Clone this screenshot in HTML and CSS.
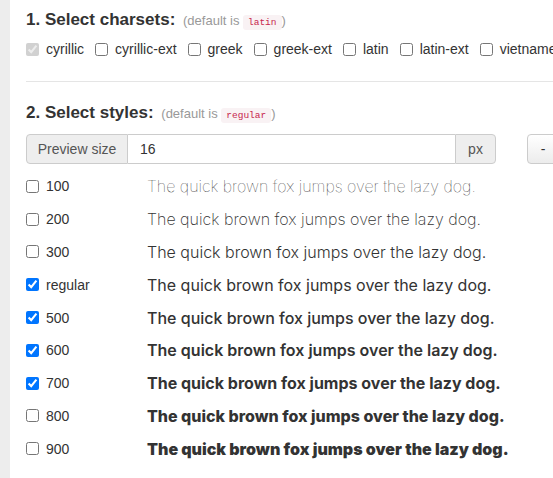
FILE: index.html
```html
<!DOCTYPE html>
<html>
<head>
<meta charset="utf-8">
<link rel="stylesheet" href="styles.css">
</head>
<body>
<div class="page">
  <aside class="rail"></aside>
  <main class="content">
    <section class="charsets">
      <h2 class="heading">1. Select charsets: <span class="hint">(default is <code>latin</code>)</span></h2>
      <div class="charset-list">
        <label class="check"><input type="checkbox" checked disabled> cyrillic</label>
        <label class="check"><input type="checkbox"> cyrillic-ext</label>
        <label class="check"><input type="checkbox"> greek</label>
        <label class="check"><input type="checkbox"> greek-ext</label>
        <label class="check"><input type="checkbox"> latin</label>
        <label class="check"><input type="checkbox"> latin-ext</label>
        <label class="check"><input type="checkbox"> vietnamese</label>
      </div>
    </section>
    <hr class="divider">
    <section class="styles">
      <h2 class="heading">2. Select styles: <span class="hint">(default is <code>regular</code>)</span></h2>
      <div class="toolbar">
        <div class="input-group">
          <span class="addon addon-left">Preview size</span>
          <input class="size-input" type="text" value="16">
          <span class="addon addon-right">px</span>
        </div>
        <button class="btn">-</button>
      </div>
      <div class="style-list">
        <label class="style-row"><span class="check"><input type="checkbox"> 100</span><span class="sample w100">The quick brown fox jumps over the lazy dog.</span></label>
        <label class="style-row"><span class="check"><input type="checkbox"> 200</span><span class="sample w200">The quick brown fox jumps over the lazy dog.</span></label>
        <label class="style-row"><span class="check"><input type="checkbox"> 300</span><span class="sample w300">The quick brown fox jumps over the lazy dog.</span></label>
        <label class="style-row"><span class="check"><input type="checkbox" checked> regular</span><span class="sample w400">The quick brown fox jumps over the lazy dog.</span></label>
        <label class="style-row"><span class="check"><input type="checkbox" checked> 500</span><span class="sample w500">The quick brown fox jumps over the lazy dog.</span></label>
        <label class="style-row"><span class="check"><input type="checkbox" checked> 600</span><span class="sample w600">The quick brown fox jumps over the lazy dog.</span></label>
        <label class="style-row"><span class="check"><input type="checkbox" checked> 700</span><span class="sample w700">The quick brown fox jumps over the lazy dog.</span></label>
        <label class="style-row"><span class="check"><input type="checkbox"> 800</span><span class="sample w800">The quick brown fox jumps over the lazy dog.</span></label>
        <label class="style-row"><span class="check"><input type="checkbox"> 900</span><span class="sample w900">The quick brown fox jumps over the lazy dog.</span></label>
      </div>
    </section>
  </main>
</div>
</body>
</html>
```
FILE: styles.css
```css
html, body {
  margin: 0;
  padding: 0;
  background: #fff;
  overflow: hidden;
}
body {
  font-family: "Liberation Sans", Arial, sans-serif;
  font-size: 14px;
  color: #333;
}
.page {
  display: flex;
  min-height: 478px;
}
.rail {
  width: 10px;
  flex: 0 0 10px;
  background: #ededed;
}
.content {
  flex: 1;
  min-width: 0;
  padding: 10px 0 0 16px;
  white-space: nowrap;
}
.heading {
  margin: 0;
  height: 20px;
  font-size: 17px;
  line-height: 20px;
  font-weight: bold;
  color: #333;
}
.hint {
  font-size: 13px;
  line-height: 1;
  font-weight: normal;
  color: #999;
  margin-left: 3px;
}
code {
  font-family: "Liberation Mono", monospace;
  font-size: 9.5px;
  line-height: 1;
  color: #c7254e;
  background: #f9f2f4;
  border-radius: 3px;
  padding: 2px 5px;
}
.charset-list {
  display: flex;
  gap: 11px;
  margin-top: 9px;
  line-height: 20px;
}
.check {
  display: inline-flex;
  align-items: center;
  gap: 7px;
  font-size: 14px;
}
.check input {
  margin: 0;
  width: 13px;
  height: 13px;
  flex: 0 0 13px;
}
.divider {
  border: 0;
  border-top: 1px solid #e5e5e5;
  margin: 22px 0 21px;
}
.toolbar {
  display: flex;
  gap: 31px;
  margin-top: 11px;
}
.input-group {
  display: flex;
  width: 470px;
  flex: 0 0 470px;
  height: 30px;
}
.addon {
  display: flex;
  align-items: center;
  justify-content: center;
  background: #eee;
  color: #555;
  border: 1px solid #ccc;
  font-size: 14px;
}
.addon-left {
  width: 100px;
  border-radius: 4px 0 0 4px;
}
.addon-right {
  width: 39px;
  border-radius: 0 4px 4px 0;
}
.size-input {
  flex: 1;
  min-width: 0;
  margin: 0;
  border: 1px solid #ccc;
  border-left: 0;
  border-right: 0;
  padding: 0 12px;
  font-family: "Liberation Sans", Arial, sans-serif;
  font-size: 14px;
  color: #333;
  outline: none;
}
.btn {
  width: 32px;
  height: 30px;
  flex: 0 0 32px;
  border: 1px solid #ccc;
  border-radius: 4px;
  background: linear-gradient(#fff, #ececec);
  color: #333;
  font-family: "Liberation Sans", Arial, sans-serif;
  font-size: 14px;
  padding: 0;
}
.style-list {
  display: flex;
  flex-direction: column;
  margin-top: 6px;
}
.style-row {
  display: grid;
  grid-template-columns: 121px auto;
  align-items: center;
  height: 32.8px;
}
.sample {
  font-family: Inter, sans-serif;
  font-size: 16px;
  color: #333;
}
.w100 { font-weight: 100; color: #222; }
.w200 { font-weight: 200; }
.w300 { font-weight: 300; }
.w400 { font-weight: 400; }
.w500 { font-weight: 500; }
.w600 { font-weight: 600; }
.w700 { font-weight: 700; }
.w800 { font-weight: 800; }
.w900 { font-weight: 900; }
```
